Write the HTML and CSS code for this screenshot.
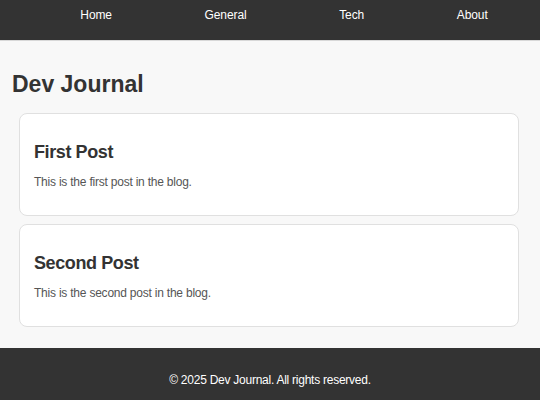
FILE: index.html
```html
<!DOCTYPE html>
<html lang="en">
<head>
<meta charset="utf-8">
<title>Dev Journal</title>
<link rel="stylesheet" href="styles.css">
</head>
<body>
<header class="site-header">
  <nav class="nav">
    <a class="nav-link" href="#">Home</a>
    <a class="nav-link" href="#">General</a>
    <a class="nav-link" href="#">Tech</a>
    <a class="nav-link" href="#">About</a>
  </nav>
</header>
<main class="main">
  <h1 class="page-title">Dev Journal</h1>
  <article class="post">
    <h2 class="post-title">First Post</h2>
    <p class="post-text">This is the first post in the blog.</p>
  </article>
  <article class="post">
    <h2 class="post-title">Second Post</h2>
    <p class="post-text">This is the second post in the blog.</p>
  </article>
</main>
<footer class="site-footer">
  <p class="footer-text">&copy; 2025 Dev Journal. All rights reserved.</p>
</footer>
</body>
</html>
```

FILE: styles.css
```css
html, body {
  margin: 0;
  padding: 0;
}
body {
  background: #f8f8f8;
  font-family: "Liberation Sans", Arial, sans-serif;
  color: #333;
}
.site-header {
  background: #333;
  height: 41px;
  border-bottom: 1px solid #d8d8d8;
  box-sizing: border-box;
}
.nav {
  display: flex;
  justify-content: space-around;
  padding: 8px 6px 0 34px;
}
.nav-link {
  color: #fff;
  text-decoration: none;
  font-size: 12px;
  letter-spacing: -0.1px;
}
.main {
  padding: 19px 12px 13px 12px;
}
.page-title {
  margin: 11px 0 15px;
  font-size: 23px;
  font-weight: bold;
  color: #333;
}
.post {
  width: 500px;
  box-sizing: border-box;
  margin: 0 0 8px 7px;
  background: #fff;
  border: 1px solid #e0e0e0;
  border-radius: 8px;
  padding: 15px 15px 15px 14px;
}
.post-title {
  margin: 13px 0 12px;
  font-size: 18px;
  color: #333;
  letter-spacing: -0.4px;
}
.post-text {
  margin: 0 0 11px;
  font-size: 12px;
  color: #555;
  letter-spacing: -0.22px;
}
.site-footer {
  background: #333;
  color: #fff;
  text-align: center;
  padding: 25px 0 20px;
}
.footer-text {
  margin: 0;
  font-size: 12px;
  letter-spacing: -0.25px;
}
```
